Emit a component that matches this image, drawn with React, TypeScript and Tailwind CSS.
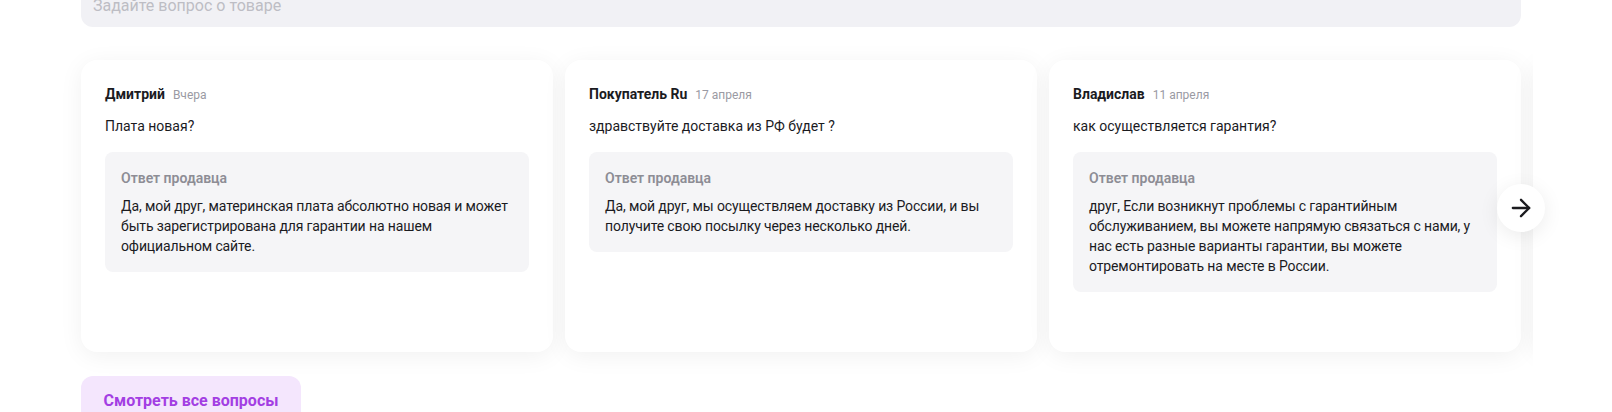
import { ArrowRight } from "lucide-react"

interface Question {
  author: string
  date: string
  text: string
  answer: string
}

const questions: Question[] = [
  {
    author: "Дмитрий",
    date: "Вчера",
    text: "Плата новая?",
    answer:
      "Да, мой друг, материнская плата абсолютно новая и может быть зарегистрирована для гарантии на нашем официальном сайте.",
  },
  {
    author: "Покупатель Ru",
    date: "17 апреля",
    text: "здравствуйте доставка из РФ будет ?",
    answer:
      "Да, мой друг, мы осуществляем доставку из России, и вы получите свою посылку через несколько дней.",
  },
  {
    author: "Владислав",
    date: "11 апреля",
    text: "как осуществляется гарантия?",
    answer:
      "друг, Если возникнут проблемы с гарантийным обслуживанием, вы можете напрямую связаться с нами, у нас есть разные варианты гарантии, вы можете отремонтировать на месте в России.",
  },
  {
    author: "Алексей",
    date: "9 апреля",
    text: "Есть ли в наличии?",
    answer: "Да, товар в наличии.",
  },
]

function QuestionCard({ q }: { q: Question }) {
  return (
    <div className="w-[472px] h-[292px] shrink-0 bg-white rounded-2xl p-6 shadow-[0_4px_24px_rgba(0,0,0,0.06)]">
      <div className="flex items-baseline gap-2">
        <span className="text-sm leading-5 font-bold text-[#1b1b1f]">{q.author}</span>
        <span className="text-xs text-[#9a9aa3]">{q.date}</span>
      </div>
      <p className="mt-3 text-sm leading-5 text-[#1b1b1f]">{q.text}</p>
      <div className="mt-4 bg-[#f5f5f7] rounded-lg p-4">
        <div className="text-sm leading-5 font-semibold text-[#8d8d95]">Ответ продавца</div>
        <p className="mt-2 text-sm leading-5 tracking-[-0.12px] text-[#1b1b1f]">{q.answer}</p>
      </div>
    </div>
  )
}

export default function App() {
  return (
    <div className="w-[1612px] h-[412px] overflow-hidden bg-white font-['Roboto',sans-serif]">
      <div className="w-[1440px] ml-[81px]">
        <div className="-mt-[15px] h-[42px] rounded-xl bg-[#f1f1f5] px-3 flex items-center">
          <span className="text-base text-[#bdbdc4]">Задайте вопрос о товаре</span>
        </div>

        <div className="relative mt-[33px]">
          <div className="overflow-hidden -ml-6 pl-6 w-[1476px] -my-6 py-6">
            <div className="flex gap-3">
              {questions.map((q) => (
                <QuestionCard key={q.author} q={q} />
              ))}
            </div>
          </div>
          <button className="absolute -right-6 top-[148px] w-12 h-12 rounded-full bg-white flex items-center justify-center shadow-[0_4px_20px_rgba(0,0,0,0.08)]">
            <ArrowRight size={28} strokeWidth={2} className="text-[#1b1b1f]" />
          </button>
        </div>

        <button className="mt-6 w-[220px] h-[50px] rounded-xl bg-[#f4e6fd] text-base font-bold text-[#a33ee3]">
          Смотреть все вопросы
        </button>
      </div>
    </div>
  )
}
